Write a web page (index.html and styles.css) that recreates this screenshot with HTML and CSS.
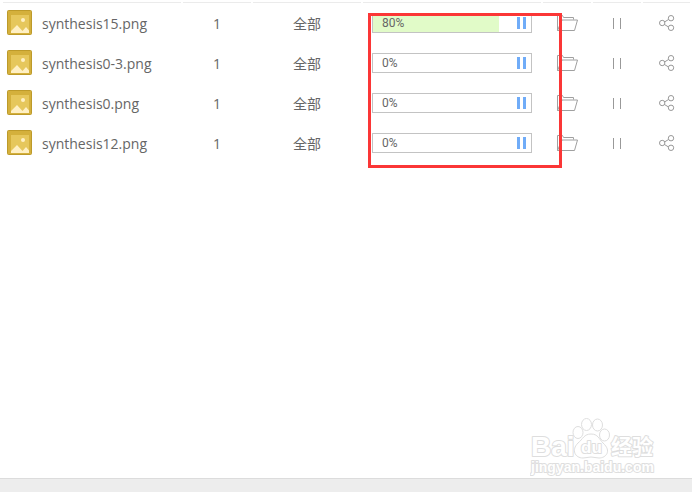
FILE: index.html
```html
<!DOCTYPE html>
<html lang="zh">
<head>
  <meta charset="UTF-8" />
  <meta name="viewport" content="width=device-width, initial-scale=1.0"/>
  <title>synthesis</title>
  <link rel="stylesheet" href="styles.css">
</head>
<body>
  <svg class="defs" aria-hidden="true">
    <symbol id="picture" viewBox="0 0 25 25">
      <rect x=".5" y=".5" width="24" height="24" rx="1" fill="#d4b03c" stroke="#bd9a2a"/>
      <rect x="4" y="5" width="18" height="18" fill="#e6c75c"/>
      <circle cx="16" cy="10" r="2" fill="#fff0c4"/>
      <path d="M4 23v-2l6-6 5.500 6 3.500-4 3 3.500v2.500z" fill="#fff0c4"/>
    </symbol>
    <symbol id="folder" viewBox="0 0 21 17">
      <path d="M.5 15.500V.5h5l1 2h10v2M.5 15.500l4.500-10.500h15.500l-3 10.500z" fill="none" stroke="#a0a0a0"/>
    </symbol>
    <symbol id="share" viewBox="0 0 16 16">
      <path d="M5.500 7l4-2.500M5.500 9.500l4 2.500" fill="none" stroke="#999"/>
      <g fill="none" stroke="#999">
        <circle cx="3.200" cy="8" r="2.700"/>
        <circle cx="12" cy="3.200" r="2.700"/>
        <circle cx="12" cy="12.800" r="2.700"/>
      </g>
    </symbol>
  </svg>

  <main>
    <table class="files">
      <colgroup>
        <col><col class="count"><col class="pages"><col class="state"><col class="tool"><col class="tool"><col class="last">
      </colgroup>
      <thead>
        <tr><th></th><th></th><th></th><th></th><th></th><th></th><th></th></tr>
      </thead>
      <tbody>
        <tr>
          <td><div class="name"><svg><use href="#picture"/></svg>synthesis15.png</div></td>
          <td>1</td>
          <td>全部</td>
          <td><div class="progress" role="progressbar" aria-label="synthesis15.png" aria-valuenow="80"><div class="bar" style="width: 80%"></div><span>80%</span><button class="hold" aria-label="暂停"></button></div></td>
          <td><button class="icon" aria-label="打开"><svg class="folder"><use href="#folder"/></svg></button></td>
          <td><button class="icon" aria-label="暂停"><i class="pause"></i></button></td>
          <td><button class="icon" aria-label="分享"><svg class="share"><use href="#share"/></svg></button></td>
        </tr>
        <tr>
          <td><div class="name"><svg><use href="#picture"/></svg>synthesis0-3.png</div></td>
          <td>1</td>
          <td>全部</td>
          <td><div class="progress" role="progressbar" aria-label="synthesis0-3.png" aria-valuenow="0"><span>0%</span><button class="hold" aria-label="暂停"></button></div></td>
          <td><button class="icon" aria-label="打开"><svg class="folder"><use href="#folder"/></svg></button></td>
          <td><button class="icon" aria-label="暂停"><i class="pause"></i></button></td>
          <td><button class="icon" aria-label="分享"><svg class="share"><use href="#share"/></svg></button></td>
        </tr>
        <tr>
          <td><div class="name"><svg><use href="#picture"/></svg>synthesis0.png</div></td>
          <td>1</td>
          <td>全部</td>
          <td><div class="progress" role="progressbar" aria-label="synthesis0.png" aria-valuenow="0"><span>0%</span><button class="hold" aria-label="暂停"></button></div></td>
          <td><button class="icon" aria-label="打开"><svg class="folder"><use href="#folder"/></svg></button></td>
          <td><button class="icon" aria-label="暂停"><i class="pause"></i></button></td>
          <td><button class="icon" aria-label="分享"><svg class="share"><use href="#share"/></svg></button></td>
        </tr>
        <tr>
          <td><div class="name"><svg><use href="#picture"/></svg>synthesis12.png</div></td>
          <td>1</td>
          <td>全部</td>
          <td><div class="progress" role="progressbar" aria-label="synthesis12.png" aria-valuenow="0"><span>0%</span><button class="hold" aria-label="暂停"></button></div></td>
          <td><button class="icon" aria-label="打开"><svg class="folder"><use href="#folder"/></svg></button></td>
          <td><button class="icon" aria-label="暂停"><i class="pause"></i></button></td>
          <td><button class="icon" aria-label="分享"><svg class="share"><use href="#share"/></svg></button></td>
        </tr>
      </tbody>
    </table>
    <div class="marker"></div>
  </main>

  <div class="watermark">
    <svg viewBox="0 0 126 60" role="img" aria-label="Baidu 经验">
      <g fill="#fff" stroke="#dedede">
        <ellipse cx="48" cy="14.500" rx="5" ry="6"/>
        <ellipse cx="56.500" cy="6.500" rx="5" ry="6"/>
        <ellipse cx="67.500" cy="7" rx="5" ry="6"/>
        <ellipse cx="74.500" cy="17" rx="5" ry="6"/>
        <path d="M61 16c7 0 8 5 12 9 9 8 3 15-4 15-3 0-5-1-8-1s-5 1-8 1c-8 0-12-8-5-15 5-4 6-9 13-9z"/>
      </g>
      <g class="brand">
        <text x="1" y="38">Bai</text>
        <text class="du" x="51" y="35">du</text>
        <text class="cn" x="81" y="36">经验</text>
        <text class="site" x="1" y="54">jingyan.baidu.com</text>
      </g>
    </svg>
  </div>
  <footer></footer>
</body>
</html>
```
FILE: styles.css
```css
* { box-sizing: border-box; }
body {
  margin: 0;
  min-height: 100vh;
  display: flex;
  flex-direction: column;
  background: #fff;
  color: #666;
  font-family: "Open Sans", "Noto Sans CJK SC", sans-serif;
  font-size: 14px;
}
main {
  position: relative;
  flex: 1;
  padding-left: 1px;
}
.defs {
  position: absolute;
  width: 0;
  height: 0;
}
.files {
  width: 100%;
  table-layout: fixed;
  border-spacing: 2px 0;
}
.count { width: 68px; }
.pages { width: 108px; }
.state { width: 178px; }
.tool { width: 48px; }
.last { width: 47px; }
th {
  height: 3px;
  padding: 0;
  border-bottom: 1px solid #ebebeb;
}
td {
  height: 40px;
  padding: 0;
  text-align: center;
}
.name {
  display: flex;
  align-items: center;
  gap: 10px;
  padding-left: 4px;
}
.name svg {
  width: 25px;
  height: 25px;
  margin-bottom: 2px;
}
.progress {
  position: relative;
  display: flex;
  align-items: center;
  justify-content: space-between;
  height: 20px;
  margin: 0 9px;
  padding: 0 5px 0 9px;
  border: 1px solid #c3c3c3;
  font-family: Roboto, sans-serif;
  font-size: 12px;
}
.bar {
  position: absolute;
  top: 0;
  left: 0;
  height: 100%;
  background: #e1fbc8;
}
.progress span { position: relative; }
.hold {
  width: 9px;
  height: 12px;
  padding: 0;
  border: solid #70acf8;
  border-width: 0 3px;
  background: none;
}
.icon {
  display: flex;
  align-items: center;
  justify-content: center;
  width: 100%;
  height: 20px;
  padding: 0;
  border: none;
  background: none;
}
.folder {
  width: 21px;
  height: 17px;
}
.pause {
  width: 8px;
  height: 11px;
  border: solid #999;
  border-width: 0 1px;
}
.share {
  width: 16px;
  height: 16px;
}
/* red frame over the progress column */
.marker {
  position: absolute;
  top: 13px;
  right: 130px;
  width: 194px;
  height: 155px;
  border: 3px solid #fb3636;
}
.watermark {
  display: flex;
  justify-content: flex-end;
  padding-right: 36px;
}
.watermark svg {
  width: 126px;
  height: 60px;
}
.brand {
  fill: #fff;
  stroke: #dedede;
  stroke-width: 2px;
  stroke-linejoin: round;
  paint-order: stroke;
  font-family: "Liberation Sans", "Noto Sans CJK SC", sans-serif;
  font-size: 28px;
  font-weight: bold;
}
.du { font-size: 17px; }
.cn { font-size: 21px; }
.site { font-size: 14px; }
footer {
  height: 14px;
  border-top: 1px solid #dcdcdc;
  background: #ededed;
}
```
